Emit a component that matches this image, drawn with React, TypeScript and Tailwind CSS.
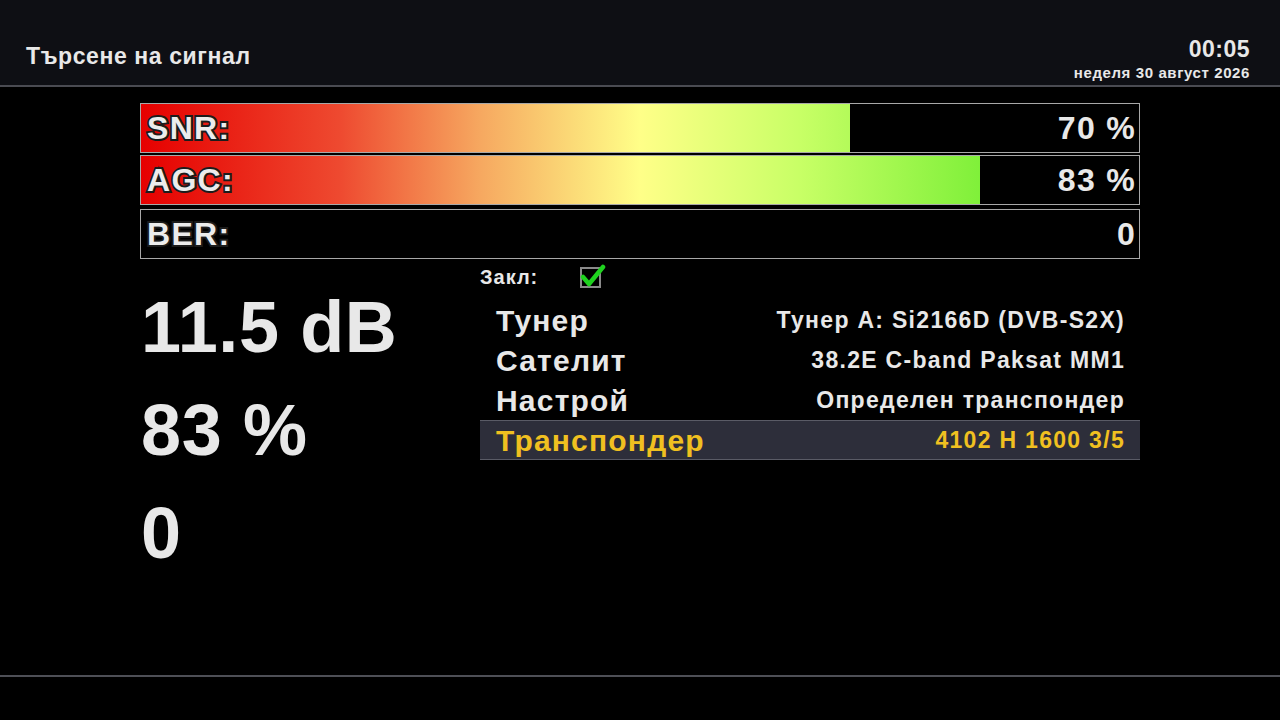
const BARS = [
  { label: "SNR:", value: "70 %", fill: 709 },
  { label: "AGC:", value: "83 %", fill: 839 },
  { label: "BER:", value: "0", fill: 0 },
];

const ROWS = [
  { label: "Тунер", value: "Тунер A: Si2166D (DVB-S2X)" },
  { label: "Сателит", value: "38.2E C-band Paksat MM1" },
  { label: "Настрой", value: "Определен транспондер" },
  { label: "Транспондер", value: "4102 H 1600 3/5", active: true },
];

function CheckBox() {
  return (
    <div className="relative w-[21px] h-[21px] border-2 border-[#8a8a8a]">
      <svg className="absolute -top-[5px] -left-[2px]" width="26" height="26" viewBox="0 0 26 26">
        <path d="M3 13 L9 20 L23 3" fill="none" stroke="#1fd21f" strokeWidth="4.5" strokeLinecap="round" strokeLinejoin="round" />
      </svg>
    </div>
  );
}

export default function App() {
  return (
    <div className="w-[1280px] h-[720px] bg-black flex flex-col overflow-hidden font-['Liberation_Sans',Arial,sans-serif] text-[#e8e8e8]">
      <header className="h-[87px] shrink-0 bg-[#0e0f14] border-b-2 border-[#4a4b52] flex items-end justify-between px-[26px] pb-[5px]">
        <div className="text-[23px] font-bold tracking-[0.6px] mb-[7px]">Търсене на сигнал</div>
        <div className="flex flex-col items-end pr-[4px] leading-none">
          <div className="text-[23px] font-bold tracking-[0.5px]">00:05</div>
          <div className="text-[15px] font-bold tracking-[0.6px] mt-[4px]">неделя 30 август 2026</div>
        </div>
      </header>

      <main className="flex-1 flex flex-col pt-[16px]">
        <div className="ml-[140px] w-[1000px] flex flex-col gap-[2px]">
          {BARS.map((b, i) => (
            <div
              key={b.label}
              className={`relative h-[50px] border border-[#a8a8a8] bg-black overflow-hidden ${i === 2 ? "mt-[2px]" : ""}`}
            >
              <div
                className="absolute inset-y-0 left-0 bg-[linear-gradient(to_right,#e60000_0%,#ee4a30_20%,#f6a860_34%,#ffff88_50%,#c8ff66_66%,#80f03a_84%,#60e020_100%)] bg-[length:998px_100%]"
                style={{ width: b.fill }}
              />
              <div className="relative h-full flex items-center justify-between pl-[6px] pr-[3px] text-[32px] font-bold tracking-[1.3px] leading-none">
                <span className="text-[#ececec] [-webkit-text-stroke:4px_#1c1c1c] [paint-order:stroke_fill]">{b.label}</span>
                <span>{b.value}</span>
              </div>
            </div>
          ))}
        </div>

        <div className="flex ml-[140px] w-[1000px]">
          <div className="w-[340px] pt-[17px] pl-[1px] text-[72px] font-bold tracking-[0.6px] leading-[103px]">
            <div>11.5 dB</div>
            <div>83 %</div>
            <div>0</div>
          </div>
          <div className="w-[660px] pt-[2px]">
            <div className="h-[32px] flex items-center text-[20px] font-bold tracking-[1px]">
              <span className="w-[100px]">Закл:</span>
              <CheckBox />
            </div>
            <div className="mt-[7px]">
              {ROWS.map((r) => (
                <div
                  key={r.label}
                  className={`h-[40px] flex items-center justify-between pl-[16px] pr-[15px] ${
                    r.active ? "bg-[#2d2e3a] border-y border-[#5a5b66]" : ""
                  }`}
                >
                  <span className={`text-[30px] font-bold tracking-[1.2px] ${r.active ? "text-[#f0c020]" : "text-[#e8e8e8]"}`}>{r.label}</span>
                  <span className={`text-[23px] font-bold tracking-[1.3px] ${r.active ? "text-[#f0c020]" : "text-[#e8e8e8]"}`}>{r.value}</span>
                </div>
              ))}
            </div>
          </div>
        </div>
      </main>

      <footer className="h-[45px] shrink-0 border-t-2 border-[#4e4f56] bg-black" />
    </div>
  );
}
